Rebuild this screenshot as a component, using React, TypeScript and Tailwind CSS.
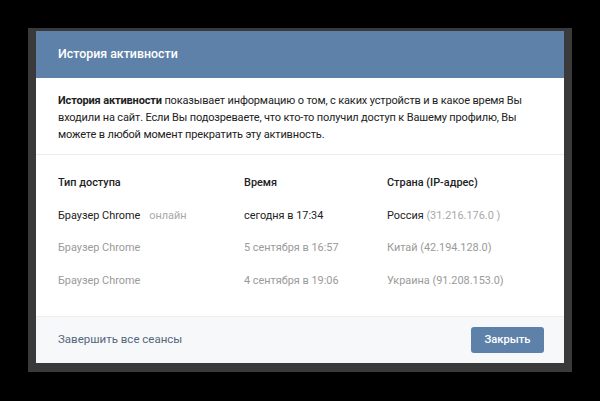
import React from "react";

const rows = [
  { type: "Браузер Chrome", online: true, time: "сегодня в 17:34", country: "Россия", ip: "(31.216.176.0 )", active: true },
  { type: "Браузер Chrome", online: false, time: "5 сентября в 16:57", country: "Китай", ip: "(42.194.128.0)", active: false },
  { type: "Браузер Chrome", online: false, time: "4 сентября в 19:06", country: "Украина", ip: "(91.208.153.0)", active: false },
];

export default function App() {
  return (
    <div
      className="w-[600px] h-[401px] bg-black overflow-hidden pt-[28px] pl-[28px]"
      style={{ fontFamily: "Roboto, 'Open Sans', sans-serif" }}
    >
      <div className="w-[544px] h-[344px] bg-[#3a3a3a] pt-[3px] px-[8px] pb-[9px]">
        <div className="w-[528px] h-[332px] bg-white flex flex-col">
          <div className="h-[47px] bg-[#5e81a9] flex items-center pl-[22px] text-white text-[12.4px] font-medium">
            История активности
          </div>
          <div className="h-[77px] pl-[22px] pr-[10px] pt-[14px] text-[11px] tracking-[-0.15px] leading-[17px] text-[#222] border-b border-[#ececec] whitespace-nowrap">
            <span className="font-bold">История активности</span> показывает информацию о том, с каких устройств и в какое время Вы
            <br />
            входили на сайт. Если Вы подозреваете, что кто-то получил доступ к Вашему профилю, Вы
            <br />
            можете в любой момент прекратить эту активность.
          </div>
          <div className="flex-1 pl-[22px] pt-[18px] text-[10.9px]">
            <div className="grid grid-cols-[186px_143px_1fr] h-[21px] items-center font-medium text-[#222]">
              <div>Тип доступа</div>
              <div>Время</div>
              <div>Страна (IP-адрес)</div>
            </div>
            {rows.map((r, i) => (
              <div
                key={i}
                className={
                  "grid grid-cols-[186px_143px_1fr] items-center " +
                  (i === 0 ? "mt-[11px] h-[22px] " : "mt-[10px] h-[23px] ") +
                  (r.active ? "text-[#222]" : "text-[#9a9a9a]")
                }
              >
                <div>
                  {r.type}
                  {r.online && <span className="ml-[9px] text-[#a8a8a8]">онлайн</span>}
                </div>
                <div>{r.time}</div>
                <div>
                  {r.country} <span className={r.active ? "text-[#a8a8a8]" : ""}>{r.ip}</span>
                </div>
              </div>
            ))}
          </div>
          <div className="h-[47px] bg-[#f7f8fa] border-t border-[#eceef1] flex items-center justify-between pl-[22px] pr-[20px] text-[11.5px]">
            <span className="text-[#55677d]">Завершить все сеансы</span>
            <button className="h-[26px] w-[73px] bg-[#5e81a9] rounded-[3px] text-white text-[11.2px] font-medium">
              Закрыть
            </button>
          </div>
        </div>
      </div>
    </div>
  );
}
